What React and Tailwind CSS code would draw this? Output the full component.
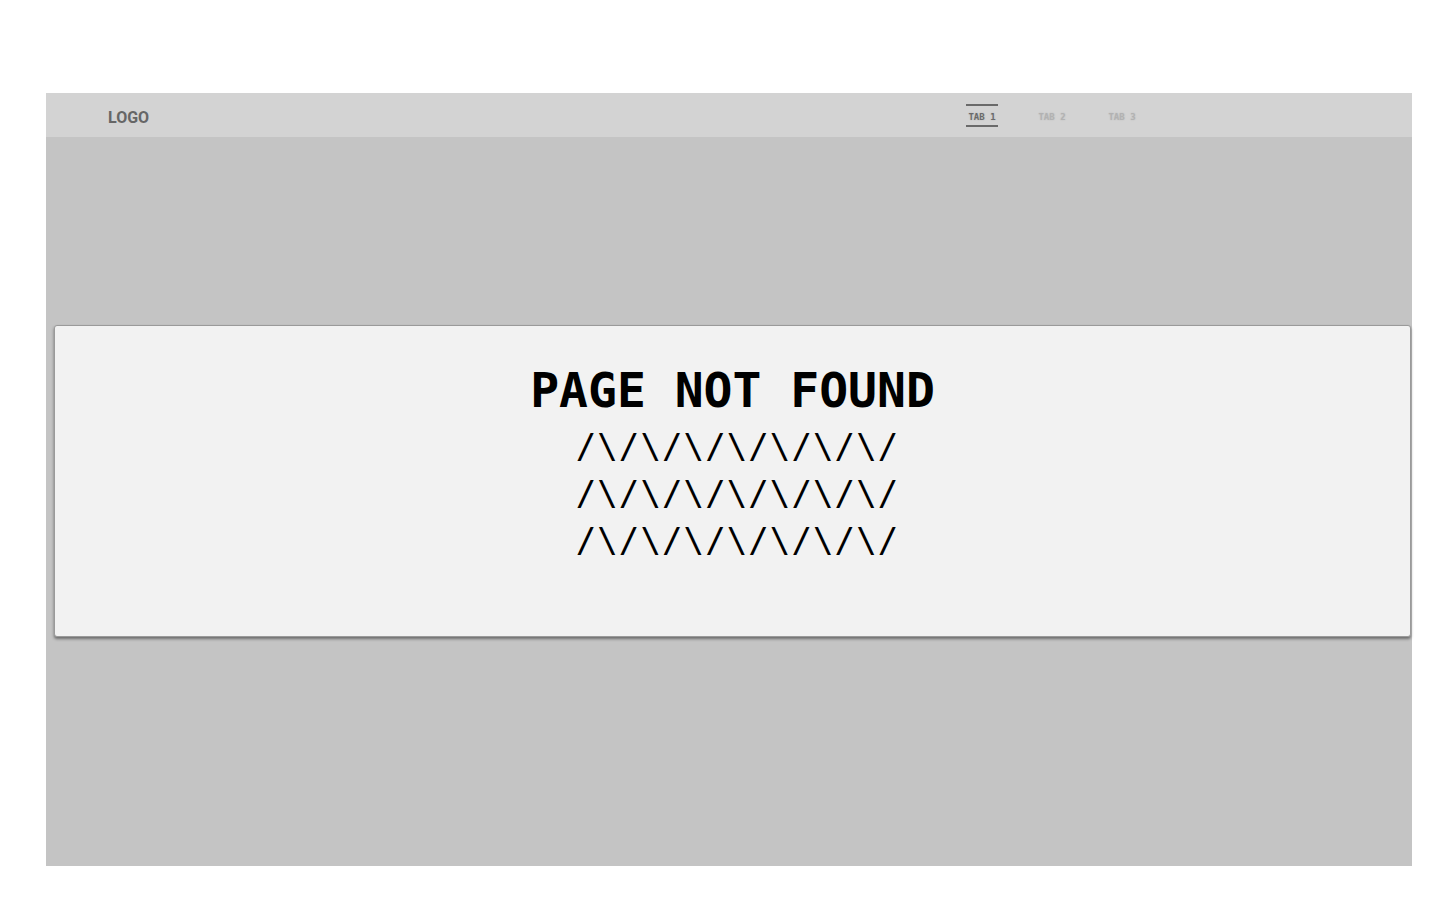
export default function App() {
  const tabs = ["TAB 1", "TAB 2", "TAB 3"];
  return (
    <div className="min-h-[919px] w-[1446px] bg-white pt-[93px] pl-[46px]">
      <div className="flex h-[773px] w-[1366px] flex-col">
        <header className="flex h-[44px] shrink-0 items-center bg-[#d3d3d3]">
          <div className="flex w-[920px] items-center pl-[62px] pt-[6px]">
            <span
              className="text-[16px] font-bold leading-none text-[#666666]"
              style={{ fontFamily: "Roboto, 'Noto Sans', sans-serif" }}
            >
              LOGO
            </span>
          </div>
          <nav className="flex items-center gap-[38px]">
            {tabs.map((t, i) => (
              <div
                key={t}
                className={
                  i === 0
                    ? "flex h-[23px] w-[32px] items-center justify-center border-y-2 border-[#6a6a6a] pt-[4px]"
                    : "flex h-[23px] w-[32px] items-center justify-center pt-[4px]"
                }
              >
                <span
                  className={
                    i === 0
                      ? "text-[9px] font-bold leading-none text-[#6a6a6a] [text-shadow:0_0_2px_rgba(0,0,0,0.15)]"
                      : "text-[9px] font-bold leading-none text-[#b2b2b2] [text-shadow:0_0_2px_rgba(0,0,0,0.12)]"
                  }
                  style={{ fontFamily: "'DejaVu Sans Mono', 'Liberation Mono', monospace" }}
                >
                  {t}
                </span>
              </div>
            ))}
          </nav>
        </header>
        <main className="flex-1 bg-[#c4c4c4] pt-[188px] pl-[8px] pr-[1px]">
          <section
            className="flex h-[312px] flex-col items-center rounded-[3px] border border-[#9a9a9a] bg-[#f2f2f2] pt-[36px] shadow-[0_2px_3px_rgba(0,0,0,0.45)]"
            style={{ fontFamily: "'DejaVu Sans Mono', 'Liberation Mono', monospace" }}
          >
            <h1 className="text-[48px] font-bold leading-[56px] text-black">PAGE NOT FOUND</h1>
            <div className="mt-[5px] flex flex-col items-center pl-[10px] text-[34px] leading-[47px] tracking-[1.1px] text-black">
              <span>/\/\/\/\/\/\/\/</span>
              <span>/\/\/\/\/\/\/\/</span>
              <span>/\/\/\/\/\/\/\/</span>
            </div>
          </section>
        </main>
      </div>
    </div>
  );
}
